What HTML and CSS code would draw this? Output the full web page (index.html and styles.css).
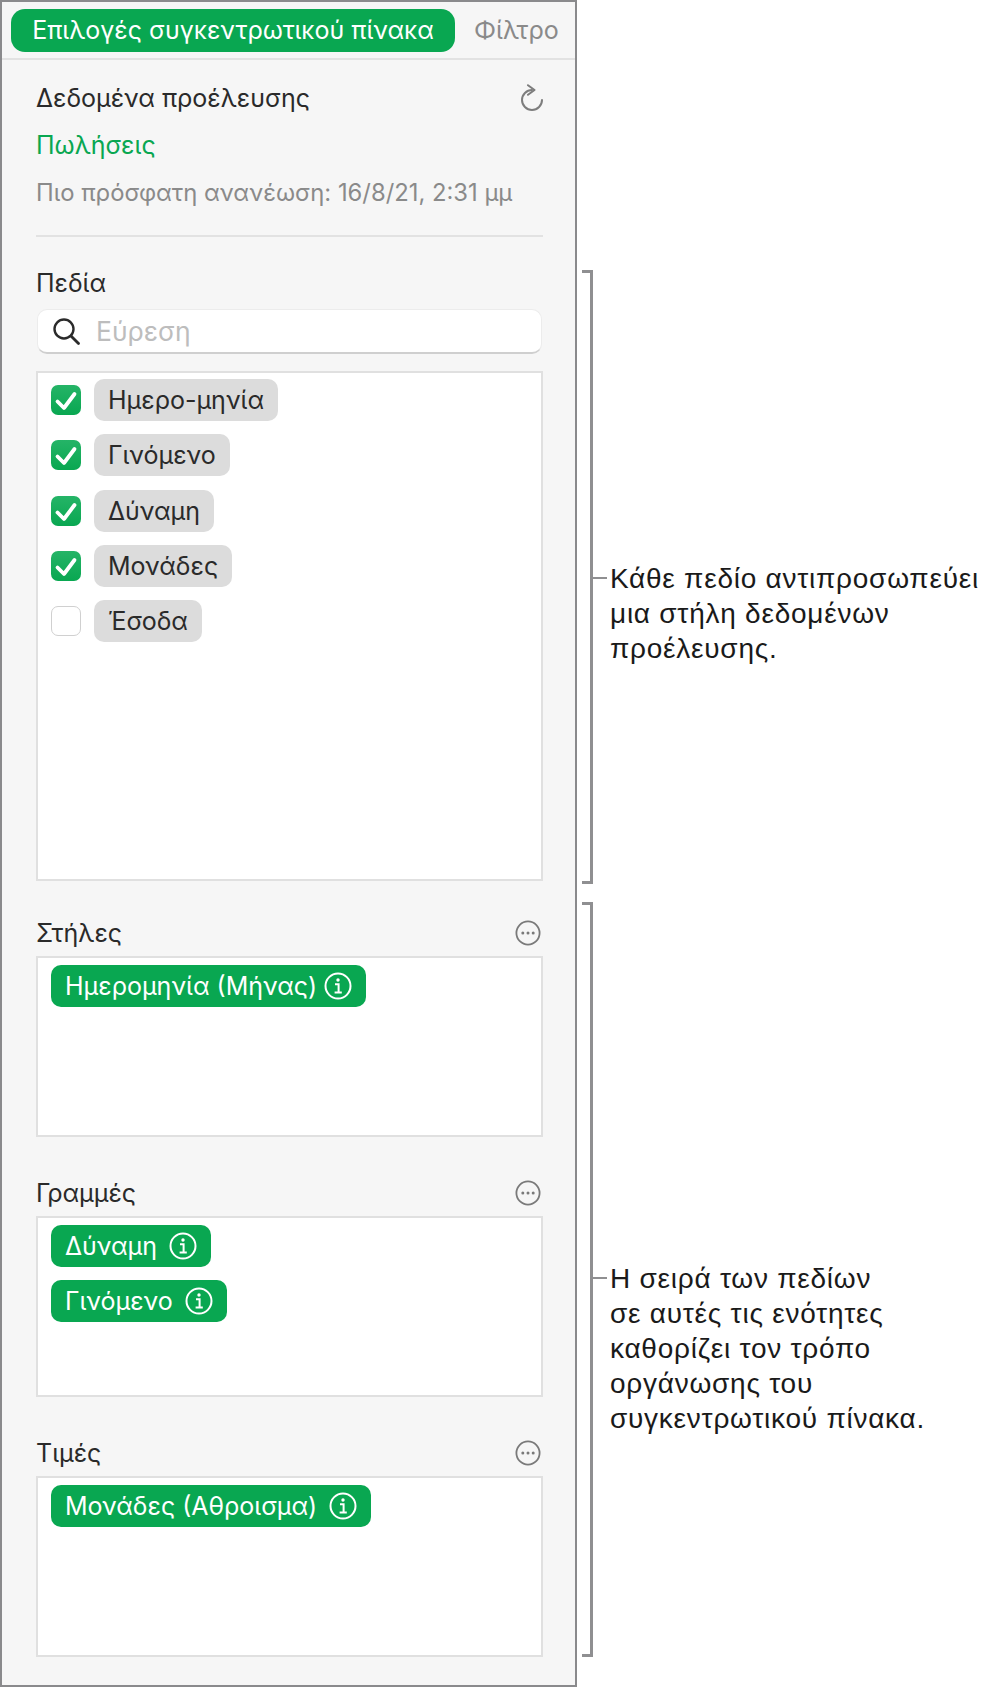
FILE: index.html
```html
<!DOCTYPE html>
<html lang="el">
<head>
<meta charset="utf-8">
<title>Επιλογές συγκεντρωτικού πίνακα</title>
<link rel="stylesheet" href="styles.css">
</head>
<body>
<div class="page">
  <aside class="panel">
    <nav class="tabs">
      <span class="tab tab-active">Επιλογές συγκεντρωτικού πίνακα</span>
      <span class="tab">Φίλτρο</span>
    </nav>
    <div class="panel-body">
      <section class="source">
        <div class="head source-head">
          <span class="label">Δεδομένα προέλευσης</span>
          <svg class="icon-refresh" viewBox="0 0 26 28" width="26" height="28"><path d="M13 6A10 10 0 1 0 23 16" fill="none" stroke="#7d7d7d" stroke-width="2" stroke-linecap="round"/><path d="M9 1.200l6.500 4.800-6.500 4.800" fill="none" stroke="#7d7d7d" stroke-width="2" stroke-linecap="round" stroke-linejoin="round"/></svg>
        </div>
        <div class="source-name">Πωλήσεις</div>
        <div class="source-date">Πιο πρόσφατη ανανέωση: 16/8/21, 2:31 μμ</div>
      </section>

      <section class="fields">
        <div class="label fields-title">Πεδία</div>
        <div class="search">
          <svg class="icon-search" viewBox="0 0 30 30" width="30" height="30"><circle cx="13" cy="13" r="9.5" fill="none" stroke="#2b2b2b" stroke-width="2.4"/><path d="M20 20l7.5 7.5" stroke="#2b2b2b" stroke-width="2.8" stroke-linecap="round"/></svg>
          <span class="search-text">Εύρεση</span>
        </div>
        <div class="box box-fields">
          <div class="field"><span class="check on"><svg viewBox="0 0 30 30" width="30" height="30"><path d="M6.500 16.500l6.500 6.500 10.500-14" fill="none" stroke="#fff" stroke-width="3.800" stroke-linecap="round" stroke-linejoin="round"/></svg></span><span class="chip">Ημερο-μηνία</span></div>
          <div class="field"><span class="check on"><svg viewBox="0 0 30 30" width="30" height="30"><path d="M6.500 16.500l6.500 6.500 10.500-14" fill="none" stroke="#fff" stroke-width="3.800" stroke-linecap="round" stroke-linejoin="round"/></svg></span><span class="chip">Γινόμενο</span></div>
          <div class="field"><span class="check on"><svg viewBox="0 0 30 30" width="30" height="30"><path d="M6.500 16.500l6.500 6.500 10.500-14" fill="none" stroke="#fff" stroke-width="3.800" stroke-linecap="round" stroke-linejoin="round"/></svg></span><span class="chip">Δύναμη</span></div>
          <div class="field"><span class="check on"><svg viewBox="0 0 30 30" width="30" height="30"><path d="M6.500 16.500l6.500 6.500 10.500-14" fill="none" stroke="#fff" stroke-width="3.800" stroke-linecap="round" stroke-linejoin="round"/></svg></span><span class="chip">Μονάδες</span></div>
          <div class="field"><span class="check"></span><span class="chip">Έσοδα</span></div>
        </div>
      </section>

      <section class="zone zone-first">
        <div class="head">
          <span class="label">Στήλες</span>
          <svg class="icon-more" viewBox="0 0 26 26" width="26" height="26"><circle cx="13" cy="13" r="11.6" fill="none" stroke="#7a7a7a" stroke-width="1.8"/><circle cx="7.800" cy="13" r="1.500" fill="#7a7a7a"/><circle cx="13" cy="13" r="1.500" fill="#7a7a7a"/><circle cx="18.200" cy="13" r="1.500" fill="#7a7a7a"/></svg>
        </div>
        <div class="box box-zone">
          <div class="pill">Ημερομηνία (Μήνας)<svg class="icon-info" viewBox="0 0 28 28" width="28" height="28"><circle cx="14" cy="14" r="12.500" fill="none" stroke="#fff" stroke-width="2"/><circle cx="14" cy="8" r="1.700" fill="#fff"/><path d="M11 12.200h3.600v8M10.600 20.600h7.200" fill="none" stroke="#fff" stroke-width="2"/></svg></div>
        </div>
      </section>

      <section class="zone">
        <div class="head">
          <span class="label">Γραμμές</span>
          <svg class="icon-more" viewBox="0 0 26 26" width="26" height="26"><circle cx="13" cy="13" r="11.6" fill="none" stroke="#7a7a7a" stroke-width="1.8"/><circle cx="7.800" cy="13" r="1.500" fill="#7a7a7a"/><circle cx="13" cy="13" r="1.500" fill="#7a7a7a"/><circle cx="18.200" cy="13" r="1.500" fill="#7a7a7a"/></svg>
        </div>
        <div class="box box-zone">
          <div class="pill">Δύναμη<svg class="icon-info wide" viewBox="0 0 28 28" width="28" height="28"><circle cx="14" cy="14" r="12.500" fill="none" stroke="#fff" stroke-width="2"/><circle cx="14" cy="8" r="1.700" fill="#fff"/><path d="M11 12.200h3.600v8M10.600 20.600h7.200" fill="none" stroke="#fff" stroke-width="2"/></svg></div>
          <div class="pill">Γινόμενο<svg class="icon-info wide" viewBox="0 0 28 28" width="28" height="28"><circle cx="14" cy="14" r="12.500" fill="none" stroke="#fff" stroke-width="2"/><circle cx="14" cy="8" r="1.700" fill="#fff"/><path d="M11 12.200h3.600v8M10.600 20.600h7.200" fill="none" stroke="#fff" stroke-width="2"/></svg></div>
        </div>
      </section>

      <section class="zone">
        <div class="head">
          <span class="label">Τιμές</span>
          <svg class="icon-more" viewBox="0 0 26 26" width="26" height="26"><circle cx="13" cy="13" r="11.6" fill="none" stroke="#7a7a7a" stroke-width="1.8"/><circle cx="7.800" cy="13" r="1.500" fill="#7a7a7a"/><circle cx="13" cy="13" r="1.500" fill="#7a7a7a"/><circle cx="18.200" cy="13" r="1.500" fill="#7a7a7a"/></svg>
        </div>
        <div class="box box-zone">
          <div class="pill">Μονάδες (Αθροισμα)<svg class="icon-info wide" viewBox="0 0 28 28" width="28" height="28"><circle cx="14" cy="14" r="12.500" fill="none" stroke="#fff" stroke-width="2"/><circle cx="14" cy="8" r="1.700" fill="#fff"/><path d="M11 12.200h3.600v8M10.600 20.600h7.200" fill="none" stroke="#fff" stroke-width="2"/></svg></div>
        </div>
      </section>
    </div>
  </aside>

  <div class="notes">
    <div class="bracket bracket-fields">
      <p class="note"><span class="tick"></span>Κάθε πεδίο αντιπροσωπεύει<br>μια στήλη δεδομένων<br>προέλευσης.</p>
    </div>
    <div class="bracket bracket-zones">
      <p class="note"><span class="tick"></span>Η σειρά των πεδίων<br>σε αυτές τις ενότητες<br>καθορίζει τον τρόπο<br>οργάνωσης του<br>συγκεντρωτικού πίνακα.</p>
    </div>
  </div>
</div>
</body>
</html>
```

FILE: styles.css
```css
* { box-sizing: border-box; }
html, body { margin: 0; padding: 0; background: #fff; }
body { font-family: Inter, "Noto Sans", sans-serif; color: #262626; }

.page { display: flex; width: 984px; height: 1689px; padding-bottom: 2px; }

.panel {
  width: 577px;
  background: #f6f6f6;
  border: 2px solid #8a8a8c;
  display: flex;
  flex-direction: column;
}

.tabs {
  height: 58px;
  flex: none;
  display: flex;
  align-items: flex-start;
  padding: 7px 0 0 9px;
  gap: 19px;
  border-bottom: 2px solid #e2e2e2;
  font-size: 25px;
}
.tab { color: #8a8a8a; line-height: 43px; white-space: nowrap; }
.tab-active {
  width: 444px;
  background: #09a751;
  color: #fff;
  border-radius: 14px;
  text-align: center;
}

.panel-body { padding: 0 32px 0 34px; }

.label { font-size: 25px; line-height: 30px; color: #2a2a2a; }
.head { display: flex; justify-content: space-between; align-items: center; height: 30px; }

.source { height: 177px; padding-top: 23px; border-bottom: 2px solid #e2e2e2; }
.icon-refresh { margin: 0 -2px 1px 0; }
.source-name { margin-top: 17px; font-size: 25px; line-height: 30px; color: #09a751; }
.source-date { margin-top: 19px; font-size: 23.8px; line-height: 28px; color: #8a8a8a; }

.fields { padding-top: 31px; }
.fields-title { display: block; }
.search {
  margin: 11px 1px 0;
  height: 45px;
  background: #fff;
  border-radius: 10px;
  border: 1px solid #ececec;
  border-bottom: 2px solid #cfcfcf;
  display: flex;
  align-items: center;
  padding-left: 13px;
  gap: 15px;
}
.search-text { font-size: 26.5px; color: #bdbdbd; }

.box { background: #fff; border: 2px solid #e0e0e0; }
.box-fields { margin-top: 17px; height: 510px; padding: 6px 0 0 13px; }
.box-zone { margin-top: 8px; height: 181px; padding: 7px 0 0 13px; }

.field { display: flex; align-items: center; height: 42px; margin-bottom: 13.3px; gap: 13px; }
.check {
  width: 30px; height: 30px; border-radius: 7px;
  border: 1px solid #d0d0d0; background: #fff;
  flex: none; display: flex;
}
.check.on { border: 0; background: linear-gradient(#25b467, #09a751); }
.chip {
  height: 42px; line-height: 42px; padding: 0 14px;
  background: #dcdcdc; border-radius: 10px;
  font-size: 25px; color: #2a2a2a; white-space: nowrap;
}

.zone { padding-top: 41px; }
.zone-first { padding-top: 37px; }
.zone .head { padding-right: 2px; }
.pill {
  display: flex; width: fit-content; align-items: center;
  height: 42px; padding: 0 14px;
  background: #09a751; color: #fff;
  border-radius: 10px;
  font-size: 25px; white-space: nowrap;
  margin-bottom: 13px;
}
.icon-info { margin-left: 7px; flex: none; }
.icon-info.wide { margin-left: 12px; }

.notes { flex: 1; padding-top: 270px; padding-left: 5px; }
.bracket {
  position: relative;
  border: 3px solid #8f8f91;
  border-left: 0;
  width: 11px;
}
.bracket-fields { height: 614px; }
.bracket-zones { height: 755px; margin-top: 18px; }
.note {
  position: absolute;
  left: 28px;
  margin: 0;
  font-family: "Liberation Sans", Arial, sans-serif;
  font-size: 28px;
  letter-spacing: 0.75px;
  line-height: 35px;
  color: #1a1a1a;
  white-space: nowrap;
}
.bracket-fields .note { top: 288px; }
.bracket-zones .note { top: 356px; }
.tick {
  position: absolute;
  left: -17px;
  top: 16px;
  width: 14px;
  height: 2px;
  background: #8f8f91;
}
```
